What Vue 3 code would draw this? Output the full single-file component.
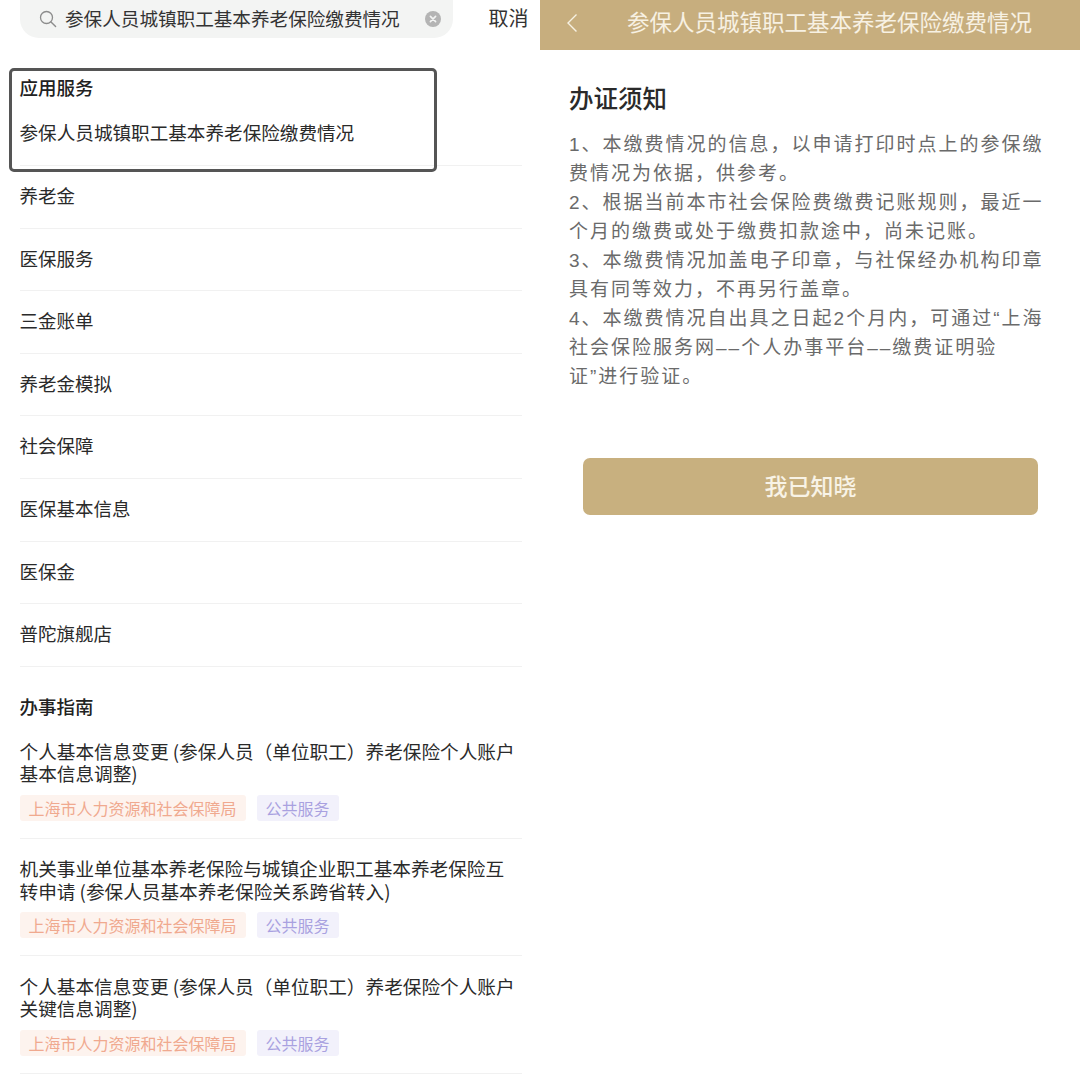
<script setup>
const services = ['养老金', '医保服务', '三金账单', '养老金模拟', '社会保障', '医保基本信息', '医保金', '普陀旗舰店']

const guides = [
  { lines: ['个人基本信息变更 (参保人员（单位职工）养老保险个人账户', '基本信息调整)'] },
  { lines: ['机关事业单位基本养老保险与城镇企业职工基本养老保险互', '转申请 (参保人员基本养老保险关系跨省转入)'] },
  { lines: ['个人基本信息变更 (参保人员（单位职工）养老保险个人账户', '关键信息调整)'] }
]

const notice = [
  '1、本缴费情况的信息，以申请打印时点上的参保缴',
  '费情况为依据，供参考。',
  '2、根据当前本市社会保险费缴费记账规则，最近一',
  '个月的缴费或处于缴费扣款途中，尚未记账。',
  '3、本缴费情况加盖电子印章，与社保经办机构印章',
  '具有同等效力，不再另行盖章。',
  '4、本缴费情况自出具之日起2个月内，可通过“上海',
  '社会保险服务网––个人办事平台––缴费证明验',
  '证”进行验证。'
]
</script>

<template>
  <div class="page">
    <section class="left">
      <div class="search-row">
        <div class="search">
          <svg class="search-icon" width="18" height="18" viewBox="0 0 18 18" fill="none">
            <circle cx="7.5" cy="7.5" r="6" stroke="#8c8c8c" stroke-width="1.3" />
            <path d="M12 12l4.6 4.6" stroke="#8c8c8c" stroke-width="1.4" stroke-linecap="round" />
          </svg>
          <span class="search-text">参保人员城镇职工基本养老保险缴费情况</span>
          <svg class="clear-icon" width="16" height="16" viewBox="0 0 16 16">
            <circle cx="8" cy="8" r="8" fill="#b4b4b4" />
            <path d="M5.4 5.4l5.2 5.2M10.6 5.4l-5.2 5.2" stroke="#f3f4f3" stroke-width="1.6" stroke-linecap="round" />
          </svg>
        </div>
        <span class="cancel">取消</span>
      </div>

      <div class="apps">
        <h3 class="group-title">应用服务</h3>
        <div class="first-row">参保人员城镇职工基本养老保险缴费情况</div>
        <div class="highlight"></div>
        <div v-for="item in services" :key="item" class="row">{{ item }}</div>
      </div>

      <h3 class="group-title guide-title">办事指南</h3>
      <div v-for="(guide, index) in guides" :key="index" class="guide">
        <div class="guide-name">
          <div v-for="line in guide.lines" :key="line">{{ line }}</div>
        </div>
        <div class="tags">
          <span class="tag orange">上海市人力资源和社会保障局</span>
          <span class="tag purple">公共服务</span>
        </div>
      </div>
    </section>

    <section class="right">
      <header class="topbar">
        <svg class="back" width="12" height="20" viewBox="0 0 12 20" fill="none">
          <path d="M10.5 1.5L2 10l8.5 8.5" stroke="#f7f1e3" stroke-width="1.4" />
        </svg>
        <span class="topbar-title">参保人员城镇职工基本养老保险缴费情况</span>
      </header>
      <div class="content">
        <h2 class="notice-title">办证须知</h2>
        <div class="notice">
          <div v-for="line in notice" :key="line">{{ line }}</div>
        </div>
        <button class="confirm">我已知晓</button>
      </div>
    </section>
  </div>
</template>

<style>
html, body {
  margin: 0;
  background: #fff;
}
</style>

<style scoped>
.page {
  width: 1080px;
  height: 1080px;
  display: flex;
  overflow: hidden;
  background: #fff;
  font-family: "Noto Sans CJK SC", "Liberation Sans", sans-serif;
}

.left {
  width: 540px;
  box-sizing: border-box;
  padding: 0 18px 0 19.5px;
  color: #2a2a2a;
}

.right {
  width: 540px;
}

.search-row {
  display: flex;
  align-items: center;
  height: 38px;
  margin-left: 0.5px;
}

.search {
  flex: none;
  width: 433px;
  height: 38px;
  box-sizing: border-box;
  display: flex;
  align-items: center;
  padding: 0 12px 0 19px;
  background: #f3f4f3;
  border-radius: 0 0 19px 19px;
}

.search-icon {
  flex: none;
}

.search-text {
  margin-left: 8px;
  padding-bottom: 3px;
  font-size: 18.6px;
  white-space: nowrap;
  color: #333;
}

.clear-icon {
  flex: none;
  margin-left: auto;
}

.cancel {
  flex: none;
  margin-left: 35.5px;
  padding-bottom: 3px;
  font-size: 20px;
  white-space: nowrap;
  color: #333;
}

.apps {
  position: relative;
  margin-top: 35px;
}

.group-title {
  margin: 0;
  font-size: 18.5px;
  line-height: 28px;
  font-weight: 500;
  color: #222;
}

.first-row {
  margin-top: 17px;
  height: 28px;
  line-height: 28px;
  padding-bottom: 19px;
  border-bottom: 1px solid #f1f1f1;
  font-size: 18.6px;
}

.highlight {
  position: absolute;
  left: -10.5px;
  top: -5px;
  width: 422px;
  height: 98px;
  border: 3px solid #555;
  border-radius: 5px;
  pointer-events: none;
}

.row {
  height: 61.6px;
  line-height: 58px;
  border-bottom: 1px solid #f1f1f1;
  font-size: 18.5px;
}

.guide-title {
  margin-top: 25px;
  margin-bottom: 1.5px;
}

.guide {
  padding-top: 18.5px;
  height: 117.5px;
  box-sizing: border-box;
  border-bottom: 1px solid #f1f1f1;
}

.guide-name {
  font-size: 18.65px;
  line-height: 22.5px;
  white-space: nowrap;
}

.tags {
  display: flex;
  gap: 11px;
  margin-top: 10px;
}

.tag {
  height: 26px;
  line-height: 26px;
  padding: 0 9px;
  font-size: 16px;
  border-radius: 3px;
  white-space: nowrap;
}

.orange {
  background: #fdf3ee;
  color: #f0a98f;
}

.purple {
  background: #f2f1fb;
  color: #a9a1e0;
}

.topbar {
  height: 50px;
  box-sizing: border-box;
  padding-bottom: 4px;
  display: flex;
  align-items: center;
  background: #c7ae7e;
}

.back {
  margin-left: 26px;
  flex: none;
}

.topbar-title {
  margin-left: 49px;
  padding-bottom: 4px;
  font-size: 22.5px;
  color: #f7f1e3;
  white-space: nowrap;
}

.content {
  padding: 0 29px;
}

.notice-title {
  margin: 30px 0 0;
  font-size: 24.5px;
  line-height: 36px;
  font-weight: 500;
  color: #2a2a2a;
}

.notice {
  margin-top: 14px;
  font-family: "Liberation Sans", "Noto Sans CJK SC", sans-serif;
  font-size: 19px;
  line-height: 29px;
  letter-spacing: 2px;
  color: #6a6a6a;
  white-space: nowrap;
}

.confirm {
  display: block;
  width: 455px;
  height: 57px;
  margin: 67px 0 0 14px;
  border: none;
  border-radius: 7px;
  background: #c8b07f;
  color: #f8f3e6;
  font-family: inherit;
  font-size: 23px;
  font-weight: 500;
  padding-bottom: 4px;
}
</style>
